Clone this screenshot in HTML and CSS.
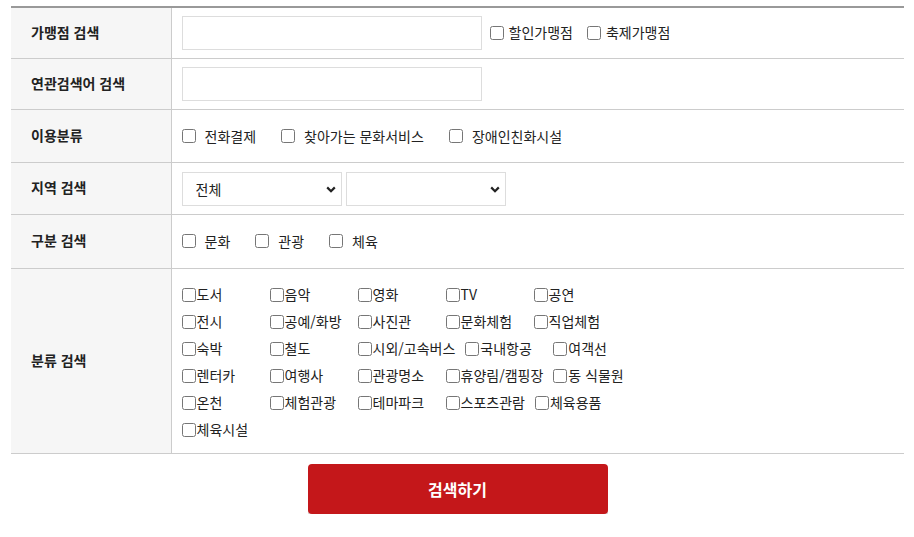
FILE: index.html
```html
<!DOCTYPE html>
<html lang="ko">
<head>
<meta charset="utf-8">
<title>가맹점 검색</title>
<link rel="stylesheet" href="styles.css">
</head>
<body>
<div class="wrap">
  <table class="search">
    <tr class="r1">
      <th>가맹점 검색</th>
      <td>
        <div class="line">
          <input type="text" class="txt">
          <label class="chk first"><input type="checkbox">할인가맹점</label>
          <label class="chk"><input type="checkbox">축제가맹점</label>
        </div>
      </td>
    </tr>
    <tr class="r2">
      <th>연관검색어 검색</th>
      <td><div class="line"><input type="text" class="txt"></div></td>
    </tr>
    <tr class="r3">
      <th>이용분류</th>
      <td>
        <div class="line">
          <label class="opt"><input type="checkbox">전화결제</label>
          <label class="opt"><input type="checkbox">찾아가는 문화서비스</label>
          <label class="opt"><input type="checkbox">장애인친화시설</label>
        </div>
      </td>
    </tr>
    <tr class="r4">
      <th>지역 검색</th>
      <td>
        <div class="line">
          <select class="sel"><option>전체</option></select>
          <select class="sel"><option></option></select>
        </div>
      </td>
    </tr>
    <tr class="r5">
      <th>구분 검색</th>
      <td>
        <div class="line">
          <label class="opt"><input type="checkbox">문화</label>
          <label class="opt"><input type="checkbox">관광</label>
          <label class="opt"><input type="checkbox">체육</label>
        </div>
      </td>
    </tr>
    <tr class="r6">
      <th>분류 검색</th>
      <td>
        <div class="cats">
          <label class="cat"><input type="checkbox">도서</label>
          <label class="cat"><input type="checkbox">음악</label>
          <label class="cat"><input type="checkbox">영화</label>
          <label class="cat"><input type="checkbox">TV</label>
          <label class="cat"><input type="checkbox">공연</label>
          <label class="cat"><input type="checkbox">전시</label>
          <label class="cat"><input type="checkbox">공예/화방</label>
          <label class="cat"><input type="checkbox">사진관</label>
          <label class="cat"><input type="checkbox">문화체험</label>
          <label class="cat"><input type="checkbox">직업체험</label>
          <label class="cat"><input type="checkbox">숙박</label>
          <label class="cat"><input type="checkbox">철도</label>
          <label class="cat"><input type="checkbox">시외/고속버스</label>
          <label class="cat"><input type="checkbox">국내항공</label>
          <label class="cat"><input type="checkbox">여객선</label>
          <label class="cat"><input type="checkbox">렌터카</label>
          <label class="cat"><input type="checkbox">여행사</label>
          <label class="cat"><input type="checkbox">관광명소</label>
          <label class="cat"><input type="checkbox">휴양림/캠핑장</label>
          <label class="cat"><input type="checkbox">동 식물원</label>
          <label class="cat"><input type="checkbox">온천</label>
          <label class="cat"><input type="checkbox">체험관광</label>
          <label class="cat"><input type="checkbox">테마파크</label>
          <label class="cat"><input type="checkbox">스포츠관람</label>
          <label class="cat"><input type="checkbox">체육용품</label>
          <label class="cat"><input type="checkbox">체육시설</label>
        </div>
      </td>
    </tr>
  </table>
  <div class="btns"><button type="button" class="btn">검색하기</button></div>
</div>
</body>
</html>
```

FILE: styles.css
```css
* { box-sizing: border-box; }
body {
  margin: 0;
  background: #fff;
  font-family: "Noto Sans CJK KR", "Noto Sans", sans-serif;
  font-size: 14px;
  color: #222;
}
.wrap {
  margin: 6px 10px 0 11px;
}
.search {
  width: 893px;
  border-collapse: collapse;
  border-top: 2px solid #999;
}
.search th {
  width: 160px;
  background: #f6f6f6;
  border-bottom: 1px solid #ccc;
  border-right: 1px solid #ccc;
  text-align: left;
  padding: 0 0 2px 20px;
  font-weight: bold;
  font-size: 14px;
  color: #222;
}
.search td {
  border-bottom: 1px solid #ccc;
  padding: 0 0 0 10px;
  vertical-align: middle;
}
.r1 th, .r1 td, .r2 th, .r2 td { height: 51px; }
.r3 th, .r3 td { height: 53px; }
.r4 th, .r4 td { height: 52px; }
.r5 th, .r5 td { height: 54px; }
.line {
  display: flex;
  align-items: center;
}
.r4 .line { padding-top: 2px; }
.txt {
  width: 300px;
  height: 34px;
  border: 1px solid #ddd;
  margin: 0;
  padding: 0 10px;
  font: inherit;
}
input[type="checkbox"] {
  width: 14px;
  height: 14px;
  margin: 0;
  flex: none;
}
.chk {
  display: flex;
  align-items: center;
  margin-left: 8px;
  margin-bottom: 2px;
}
.chk input { margin-right: 5px; margin-top: 2px; }
.chk + .chk { margin-left: 14px; }
.opt {
  display: flex;
  align-items: center;
  margin-right: 25px;
  line-height: 18px;
}
.opt input { margin-right: 9px; }
.sel {
  -webkit-appearance: none;
  appearance: none;
  width: 160px;
  height: 34px;
  border: 1px solid #ddd;
  border-radius: 0;
  margin: 0 4px 0 0;
  padding: 0 0 0 13px;
  font: inherit;
  color: #222;
  background: #fff url("data:image/svg+xml;utf8,<svg xmlns='http://www.w3.org/2000/svg' width='10' height='7' viewBox='0 0 10 7'><path d='M1.2 1.4 L5 5.2 L8.8 1.4' fill='none' stroke='%23222' stroke-width='2.2'/></svg>") no-repeat right 5px center;
}
.r6 td {
  padding-top: 12px;
  padding-bottom: 10px;
}
.cats {
  display: flex;
  flex-wrap: wrap;
  width: 470px;
}
.cat {
  display: flex;
  align-items: center;
  min-width: 88px;
  height: 27px;
  padding-right: 10px;
  white-space: nowrap;
}
.cat input { margin-right: 1px; margin-top: 2px; }
.btns {
  display: flex;
  justify-content: center;
  padding-top: 10px;
}
.btn {
  width: 300px;
  height: 50px;
  border: 0;
  border-radius: 4px;
  background: #c4171a;
  color: #fff;
  font-family: inherit;
  font-size: 16px;
  font-weight: bold;
  box-shadow: 0 3px 0 #dcdcdc;
}
```
